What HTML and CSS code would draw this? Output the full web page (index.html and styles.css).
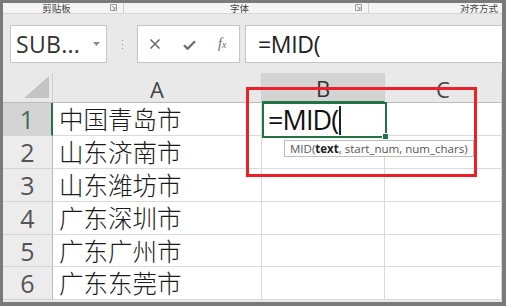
FILE: index.html
```html
<!DOCTYPE html>
<html lang="zh">
<head>
<meta charset="utf-8">
<link rel="stylesheet" href="styles.css">
</head>
<body>
<div class="frame">
  <div class="screen">
    <div class="ribbon">
      <div class="grp g1"><span class="lbl">剪贴板</span><span class="launch"><svg width="7" height="7" viewBox="0 0 7 7"><path d="M0.5 0.5h6v6h-6z M2 2l3 3 M5 3v2h-2" fill="none" stroke="#9a9a9a" stroke-width="1"/></svg></span></div>
      <div class="grp g2"><span class="lbl">字体</span><span class="launch"><svg width="7" height="7" viewBox="0 0 7 7"><path d="M0.5 0.5h6v6h-6z M2 2l3 3 M5 3v2h-2" fill="none" stroke="#9a9a9a" stroke-width="1"/></svg></span></div>
      <div class="grp g3"><span class="lbl">对齐方式</span></div>
    </div>
    <div class="fbar">
      <div class="namebox">
        <span class="nametext">SUB...</span>
        <svg class="caret" width="7" height="4" viewBox="0 0 7 4"><path d="M0 0h7L3.5 4z" fill="#8a8a8a"/></svg>
      </div>
      <div class="dots"><span></span><span></span><span></span></div>
      <div class="btns">
        <svg class="ic" width="12" height="12" viewBox="0 0 12 12"><path d="M1.5 1.5l9 9M10.5 1.5l-9 9" stroke="#6a6a6a" stroke-width="1.5" fill="none"/></svg>
        <svg class="ic" width="13" height="10" viewBox="0 0 13 10"><path d="M1 5.2l3.6 3.6L12 1.2" stroke="#6a6a6a" stroke-width="2.2" fill="none"/></svg>
        <span class="fx"><i>f</i><i class="x">x</i></span>
      </div>
      <div class="finput">=MID(</div>
    </div>
    <div class="sheet">
      <div class="corner"><svg width="25" height="22" viewBox="0 0 25 22"><path d="M25 0V22H0z" fill="#c4c4c4"/></svg></div>
      <div class="ch">A</div>
      <div class="ch sel">B</div>
      <div class="ch">C</div>

      <div class="rh sel">1</div><div class="c txt">中国青岛市</div><div class="c"></div><div class="c"></div>
      <div class="rh">2</div><div class="c txt">山东济南市</div><div class="c"></div><div class="c"></div>
      <div class="rh">3</div><div class="c txt">山东潍坊市</div><div class="c"></div><div class="c"></div>
      <div class="rh">4</div><div class="c txt">广东深圳市</div><div class="c"></div><div class="c"></div>
      <div class="rh">5</div><div class="c txt">广东广州市</div><div class="c"></div><div class="c"></div>
      <div class="rh">6</div><div class="c txt">广东东莞市</div><div class="c"></div><div class="c"></div>
    </div>
  </div>
  <div class="active"><span class="edit">=MID(</span><span class="cursor"></span><span class="handle"></span></div>
  <div class="tip">MID(<b>text</b>, start_num, num_chars)</div>
  <div class="redbox"></div>
</div>
</body>
</html>
```
FILE: styles.css
```css
html, body {
  margin: 0;
  padding: 0;
}
body {
  width: 506px;
  height: 306px;
  overflow: hidden;
  background: #7a7a7a;
  font-family: "Open Sans", "Noto Sans", sans-serif;
}
.frame {
  position: relative;
  width: 506px;
  height: 306px;
  box-sizing: border-box;
  padding: 3px 4px 4px 3px;
}
.screen {
  width: 499px;
  height: 299px;
  background: #ffffff;
  display: flex;
  flex-direction: column;
}
/* ribbon group labels */
.ribbon {
  height: 10px;
  flex: none;
  display: flex;
  background: #f4f4f4;
  border-bottom: 1px solid #d8d8d8;
}
.grp {
  display: flex;
  align-items: flex-start;
  border-right: 1px solid #d0d0d0;
  height: 10px;
}
.g1 { width: 120px; }
.g2 { width: 244px; }
.g3 { flex: 1; border-right: none; }
.lbl {
  flex: 1;
  text-align: center;
  font-family: "Noto Sans CJK SC", sans-serif;
  font-size: 9.5px;
  line-height: 10px;
  color: #444;
  white-space: nowrap;
}
.g3 .lbl { text-align: right; padding-right: 4px; }
.launch {
  display: flex;
  margin: 1px 6px 0 0;
}
/* formula bar */
.fbar {
  height: 59px;
  flex: none;
  background: #e9e9e9;
  display: flex;
  align-items: flex-start;
  padding-top: 11px;
  box-sizing: border-box;
}
.namebox {
  margin-left: 7px;
  width: 97px;
  height: 38px;
  box-sizing: border-box;
  background: #fff;
  border: 1px solid #c6c6c6;
  display: flex;
  align-items: center;
  padding-left: 5px;
}
.nametext {
  font-size: 23px;
  color: #333;
  letter-spacing: 0.3px;
  flex: 1;
}
.caret { margin-right: 6px; }
.dots {
  width: 30px;
  height: 38px;
  display: flex;
  flex-direction: column;
  align-items: center;
  justify-content: center;
  gap: 3px;
}
.dots span {
  width: 1px;
  height: 1px;
  background: #9a9a9a;
}
.btns {
  width: 103px;
  height: 38px;
  box-sizing: border-box;
  background: #fff;
  border: 1px solid #c6c6c6;
  display: flex;
  align-items: center;
  padding-left: 11px;
}
.btns .ic:nth-child(1) { margin-right: 22px; }
.btns .ic:nth-child(2) { margin-right: 22px; margin-top: 1px; }
.fx {
  font-family: "Liberation Serif", serif;
  color: #6a6a6a;
  font-size: 14px;
}
.fx .x { font-size: 10px; }
.finput {
  margin-left: 5px;
  flex: 1;
  height: 38px;
  box-sizing: border-box;
  background: #fff;
  border: 1px solid #c6c6c6;
  border-right: none;
  font-size: 23px;
  line-height: 36px;
  padding-left: 12px;
  color: #222;
  letter-spacing: -0.3px;
}
/* sheet */
.sheet {
  flex: 1;
  overflow: hidden;
  display: grid;
  grid-template-columns: 50px 209px 123px 1fr;
  grid-template-rows: 30px repeat(6, 32.9px);
  background: #e9e9e9;
}
.corner {
  display: flex;
  align-items: flex-end;
  justify-content: flex-end;
  padding: 0 3px 4px 0;
  border-right: 1px solid #d0d0d0;
  border-bottom: 1px solid #bcbcbc;
}
.ch {
  display: flex;
  align-items: center;
  justify-content: center;
  font-size: 22px;
  color: #444;
  border-right: 1px solid #d0d0d0;
  border-bottom: 1px solid #bcbcbc;
  padding-top: 2px;
}
.ch.sel {
  background: #d4d4d4;
  color: #333;
  border-bottom: 2px solid #217346;
}
.rh {
  background: #ececec;
  display: flex;
  align-items: center;
  justify-content: center;
  font-size: 25px;
  color: #555;
  border-bottom: 1px solid #d4d4d4;
  border-right: 1px solid #bcbcbc;
}
.rh.sel {
  background: #d4d4d4;
  color: #3f6e55;
  border-right: 2px solid #217346;
}
.c {
  background: #fff;
  border-right: 1px solid #dadada;
  border-bottom: 1px solid #dadada;
}
.txt {
  font-family: "Noto Sans CJK SC", sans-serif;
  font-weight: 300;
  font-size: 24.5px;
  line-height: 32px;
  color: #1a1a1a;
  padding-left: 6px;
  white-space: nowrap;
}
/* overlays */
.active {
  position: absolute;
  left: 262px;
  top: 102px;
  width: 125px;
  height: 36px;
  box-sizing: border-box;
  border: 2px solid #217346;
  background: #fff;
}
.edit {
  position: absolute;
  left: 4px;
  top: -1px;
  font-size: 27px;
  line-height: 34px;
  color: #111;
  letter-spacing: -0.9px;
}
.cursor {
  position: absolute;
  left: 75px;
  top: 2px;
  width: 2px;
  height: 29px;
  background: #222;
}
.handle {
  position: absolute;
  right: -4px;
  bottom: -4px;
  width: 5px;
  height: 5px;
  background: #217346;
  border: 1px solid #fff;
}
.tip {
  position: absolute;
  left: 284px;
  top: 140px;
  height: 17px;
  box-sizing: border-box;
  padding: 0 5px;
  border: 1px solid #bdbdbd;
  background: #fff;
  font-size: 11.5px;
  line-height: 15px;
  color: #555;
  white-space: nowrap;
}
.tip b { color: #222; }
.redbox {
  position: absolute;
  left: 246px;
  top: 87px;
  width: 231px;
  height: 90px;
  box-sizing: border-box;
  border: 3px solid #ee1f26;
}
```
